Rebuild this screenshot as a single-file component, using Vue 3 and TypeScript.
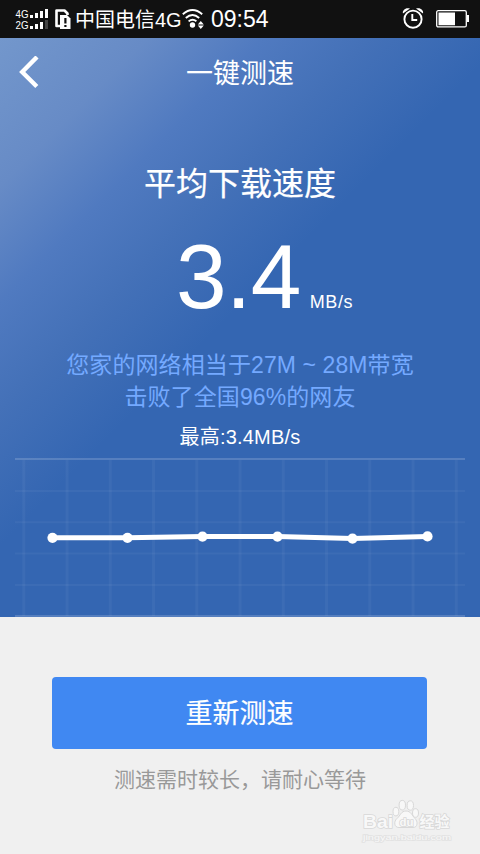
<script setup lang="ts">
interface Point {
  x: number
  y: number
}

const points: Point[] = [
  { x: 37.5, y: 79.8 },
  { x: 112.5, y: 79.8 },
  { x: 187.5, y: 78.6 },
  { x: 262.5, y: 78.6 },
  { x: 337.5, y: 80.6 },
  { x: 412.5, y: 78.4 },
]
const line: string = points.map((p) => `${p.x},${p.y}`).join(' ')
const columns: number[] = Array.from({ length: 11 }, (_, i) => 8.8 + i * 43.25)
const rows: number[] = [33, 64.3, 95.6, 127]
</script>

<template>
  <div class="screen">
    <header class="status">
      <svg class="signal" width="33" height="22" viewBox="0 0 33 22">
        <text x="0.5" y="8.8" textLength="13" lengthAdjust="spacingAndGlyphs">4G</text>
        <text x="0.5" y="19.8" textLength="13" lengthAdjust="spacingAndGlyphs">2G</text>
        <path d="M15 6h3v3h-3zM20 4h3v5h-3zM25 2h3v7h-3zM30 0h3v9h-3zM15 17h3v3h-3zM20 15h3v5h-3zM25 13h3v7h-3z" fill="#fff" />
        <path d="M30 11h3v9h-3z" fill="#444" />
      </svg>
      <svg class="sim" width="17" height="20" viewBox="0 0 17 20">
        <path d="M5 17H1.5V1.5h8L12.5 4.5V6" fill="none" stroke="#fff" stroke-width="2.6" stroke-linejoin="round" />
        <path d="M5 6h7l3.5 3.5V20H5z" fill="#fff" />
        <path d="M9.3 9h2.2v5.5H9.3zM9.3 16h2.2v2H9.3z" fill="#111" />
      </svg>
      <span class="carrier">中国电信4G</span>
      <svg class="wifi" width="24" height="20" viewBox="0 0 24 20">
        <g fill="none" stroke="#fff" stroke-width="1.9">
          <path d="M.8 5.2Q10.5 -3.2 20.2 5.2" />
          <path d="M3.8 9Q10.5 3 17.2 9" />
          <path d="M6.6 12.4Q10.5 9 14.4 12.2" />
        </g>
        <circle cx="10.5" cy="16" r="2.7" fill="#fff" />
        <path d="M18.8 12l3 3.4h-6zM18.8 20l-3-3.4h6z" fill="#fff" />
      </svg>
      <span class="clock">09:54</span>
      <svg class="alarm" width="22" height="22" viewBox="0 0 22 22">
        <circle cx="11" cy="12.2" r="8.6" fill="none" stroke="#fff" stroke-width="1.9" />
        <path d="M1 6.6C0 3 4 0 8 1.6zM21 6.6C22 3 18 0 14 1.6z" fill="#fff" />
        <path d="M10.3 7v6h4.9" fill="none" stroke="#fff" stroke-width="1.9" />
      </svg>
      <svg class="battery" width="33" height="18" viewBox="0 0 33 18">
        <rect x=".7" y=".7" width="29.6" height="16.2" rx="1.5" fill="none" stroke="#fff" stroke-width="1.3" />
        <path d="M2.5 2.5H19v12.7H2.5zM31 5h2v7h-2z" fill="#fff" />
      </svg>
    </header>

    <main class="panel">
      <nav class="nav">
        <svg class="back" width="22" height="34" viewBox="0 0 22 34">
          <path d="M19 1L4.2 16L18.8 30.5" fill="none" stroke="#fff" stroke-width="4.4" />
        </svg>
        <h1>一键测速</h1>
      </nav>
      <h2>平均下载速度</h2>
      <div class="speed">
        <span class="value">3.4</span><span class="unit">MB/s</span>
      </div>
      <div class="summary">
        <p>您家的网络相当于27M ~ 28M带宽</p>
        <p>击败了全国96%的网友</p>
      </div>
      <p class="peak">最高:3.4MB/s</p>
      <svg class="chart" width="450" height="159" viewBox="0 0 450 159">
        <g stroke="#fff" stroke-opacity=".045">
          <line v-for="x in columns" :key="x" :x1="x" y1="2" :x2="x" y2="158" stroke-width="3" />
          <line v-for="y in rows" :key="y" x1="0" :y1="y" x2="450" :y2="y" stroke-width="2" />
        </g>
        <path d="M0 1h450M0 158h450" stroke="#fff" stroke-opacity=".17" stroke-width="2" />
        <polyline :points="line" fill="none" stroke="#fff" stroke-width="5" stroke-linejoin="round" />
        <circle v-for="p in points" :key="p.x" :cx="p.x" :cy="p.y" r="5.1" fill="#fff" />
      </svg>
    </main>

    <footer class="actions">
      <button type="button">重新测速</button>
      <p>测速需时较长，请耐心等待</p>
      <svg class="mark" width="92" height="46" viewBox="0 0 92 46">
        <g fill="#f8f8f8" stroke="#d8d8d8" stroke-width="1">
          <ellipse cx="34.9" cy="12.6" rx="2.9" ry="4.3" />
          <ellipse cx="41.3" cy="6.2" rx="3.2" ry="4.8" />
          <ellipse cx="49.3" cy="6.5" rx="3.2" ry="4.7" />
          <ellipse cx="54.5" cy="14" rx="3" ry="4.3" />
          <path d="M45 12c5 0 6 4.5 9 7.5s3 9-2 9H38c-5 0-5.5-6-2-9s4-7.5 9-7.5z" />
        </g>
        <g class="ink">
          <text class="logo" x="2" y="28.5" textLength="30" lengthAdjust="spacingAndGlyphs">Bai</text>
          <text class="du" x="38.5" y="27" textLength="14" lengthAdjust="spacingAndGlyphs">du</text>
          <text class="cn" x="58.5" y="27.5" textLength="30">经验</text>
          <text class="site" x="2" y="40.5" textLength="88" lengthAdjust="spacingAndGlyphs">jingyan.baidu.com</text>
        </g>
      </svg>
    </footer>
  </div>
</template>

<style>
body {
  margin: 0;
}
</style>

<style scoped>
.screen {
  display: flex;
  flex-direction: column;
  width: 480px;
  height: 854px;
  overflow: hidden;
  font-family: 'Liberation Sans', 'Noto Sans CJK SC', sans-serif;
  background: #f0f0f0;
  color: #fff;
}
h1,
h2,
p {
  margin: 0;
  font-weight: 400;
  white-space: nowrap;
}
svg {
  display: block;
  flex: none;
}
.status {
  display: flex;
  box-sizing: border-box;
  height: 38px;
  padding: 0 11px 0 15px;
  background: #111;
}
.signal {
  margin-top: 9px;
}
.signal text {
  font-size: 10px;
  fill: #fff;
}
.sim {
  margin: 9px 0 0 7px;
}
.carrier {
  width: 106px;
  margin-left: 3px;
  font-size: 20px;
  line-height: 41px;
  white-space: nowrap;
}
.wifi {
  margin: 9px 0 0 1px;
}
.clock {
  margin-left: 5px;
  font-size: 23px;
  line-height: 39px;
}
.alarm {
  margin: 7px 0 0 auto;
}
.battery {
  margin: 10px 0 0 12px;
}
.panel {
  display: flex;
  flex-direction: column;
  align-items: center;
  height: 579px;
  background: linear-gradient(135deg, #7397cc 0, #678bc6 14%, #507ac0 25%, #4471b8 35%, #3466b2 48%);
}
.nav {
  display: grid;
  grid-template-columns: 60px 1fr 60px;
  width: 100%;
  height: 68px;
  align-items: center;
}
.back {
  margin-left: 18px;
}
h1 {
  padding-top: 2px;
  font-size: 27px;
  line-height: 68px;
  text-align: center;
}
h2 {
  margin-top: 54px;
  font-size: 32px;
  line-height: 48px;
  -webkit-text-stroke: 0.2px #fff;
}
.speed {
  display: flex;
  align-items: baseline;
  width: 306px;
  height: 98px;
  margin-top: 16px;
}
.value {
  margin-left: 89px;
  font-size: 91px;
  line-height: 106px;
  letter-spacing: -0.6px;
}
.unit {
  margin-left: 9px;
  font-size: 18px;
  letter-spacing: 0.6px;
}
.summary {
  margin-top: 27px;
  font-size: 23px;
  line-height: 32px;
  letter-spacing: 0.1px;
  text-align: center;
  color: #74a9ff;
}
.peak {
  margin-top: 9px;
  font-size: 20px;
  line-height: 30px;
  letter-spacing: 0.2px;
}
.chart {
  margin-top: auto;
}
.actions {
  display: flex;
  flex-direction: column;
  align-items: center;
  flex: 1;
  padding-top: 60px;
}
button {
  width: 375px;
  height: 72px;
  margin-right: 1px;
  padding: 3px 0 0;
  border: 0;
  border-radius: 4px;
  background: #4088f2;
  color: #fff;
  font: 27px/69px 'Liberation Sans', 'Noto Sans CJK SC', sans-serif;
  -webkit-text-stroke: 0.2px #fff;
}
.actions p {
  margin-top: 15px;
  font-size: 21px;
  line-height: 32px;
  color: #999;
}
.mark {
  align-self: flex-end;
  margin: 3px 27px 0 0;
}
.ink {
  fill: #f8f8f8;
  stroke: #d8d8d8;
  stroke-width: 1.6px;
  paint-order: stroke;
}
.logo {
  font-size: 19px;
  font-weight: 700;
}
.du {
  font-size: 11px;
  font-weight: 700;
}
.cn {
  font-size: 15px;
  font-weight: 700;
}
.site {
  font-size: 8px;
  stroke: #e2e2e2;
}
</style>
